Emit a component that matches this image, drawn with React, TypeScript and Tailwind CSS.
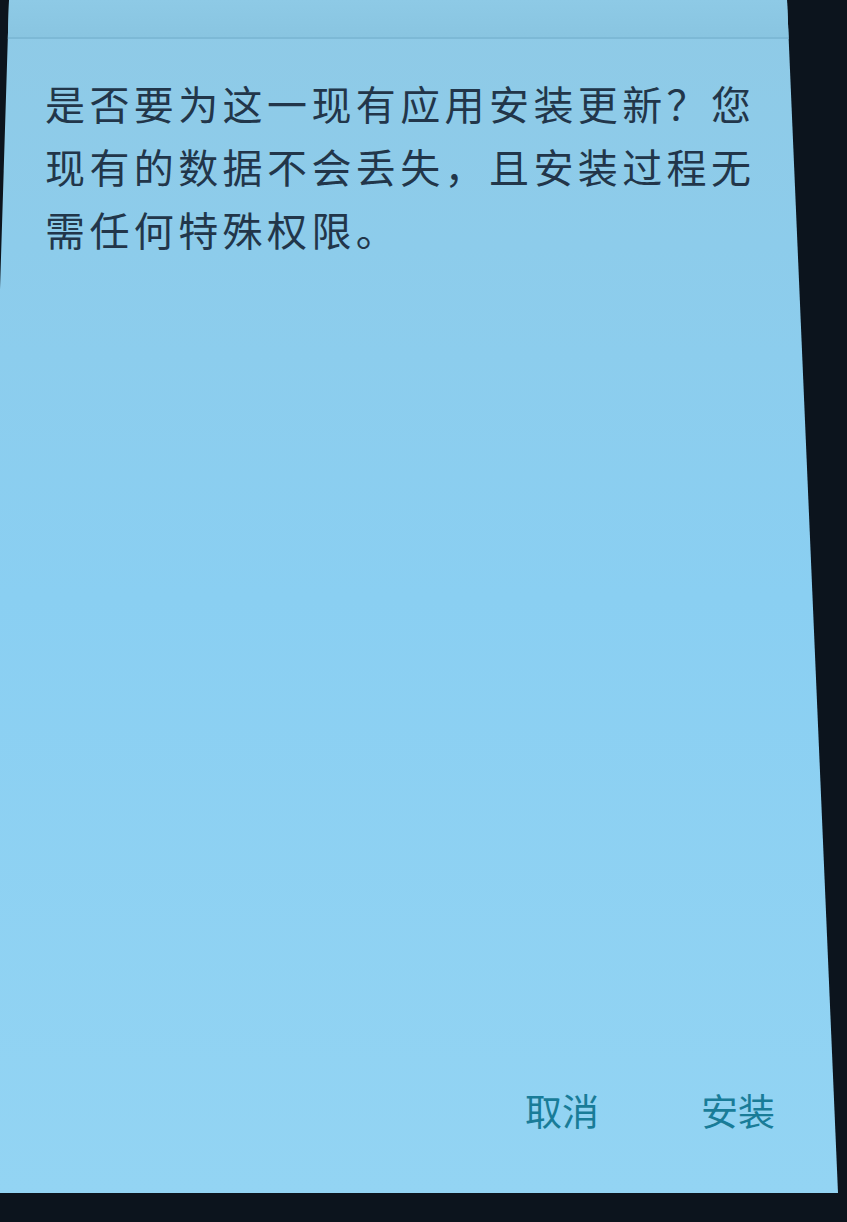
export default function App() {
  return (
    <div className="w-[847px] h-[1222px] bg-[#0c141d] overflow-hidden font-['Noto_Sans_CJK_SC','Noto_Sans',sans-serif]">
      <div className="h-[1193px] flex flex-col bg-gradient-to-b from-[#8fcae6] via-[#8acff2] to-[#93d4f3] [clip-path:polygon(9px_0,787px_0,838px_100%,0_100%,0_290px)]">
        {/* status / title strip */}
        <div className="h-[39px] shrink-0 bg-gradient-to-b from-[#8ecae6] to-[#89c5e1] border-b-2 border-[#7db9d6]" />

        <p className="pt-[33px] pl-[45px] w-[770px] text-[40px] leading-[63px] tracking-[4.4px] text-[#22364a]">
          是否要为这一现有应用安装更新？您现有的数据不会丢失，且安装过程无需任何特殊权限。
        </p>

        <div className="flex-1" />

        <div className="flex justify-end gap-[102px] pr-[72px] pb-[60px] text-[37px] leading-[46px] text-[#197c98]">
          <button type="button">取消</button>
          <button type="button">安装</button>
        </div>
      </div>
    </div>
  );
}
